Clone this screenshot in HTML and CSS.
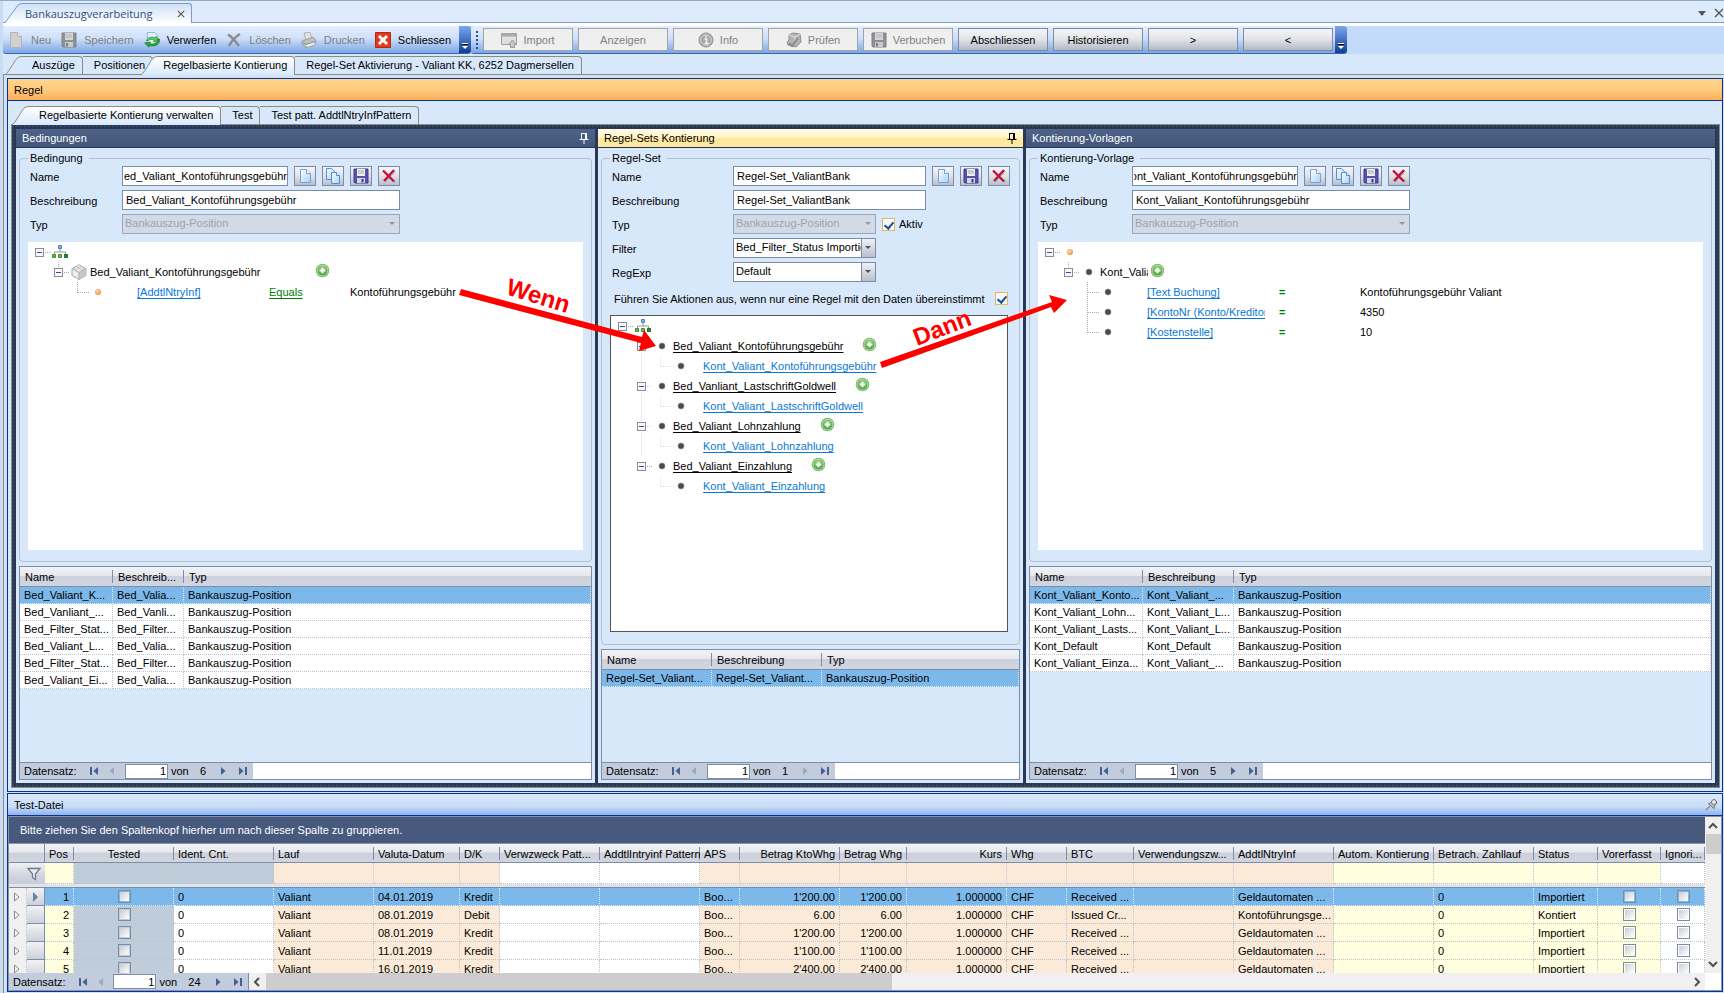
FILE: index.html
```html
<!DOCTYPE html>
<html lang="de">
<head>
<meta charset="utf-8">
<title>Bankauszugverarbeitung</title>
<link rel="stylesheet" href="styles.css">
</head>
<body>
<svg class="defs" aria-hidden="true">
  <defs>
    <linearGradient id="g-doc" x1="0" y1="0" x2="1" y2="1"><stop offset="0" stop-color="#ffffff"/><stop offset="1" stop-color="#a9d0f8"/></linearGradient>
    <linearGradient id="g-tab" x1="0" y1="0" x2="0" y2="1"><stop offset="0" stop-color="#ffffff"/><stop offset="1" stop-color="#d9e9fc"/></linearGradient>
    <linearGradient id="g-app" x1="0" y1="0" x2="0" y2="1"><stop offset="0" stop-color="#cfe0f5"/><stop offset="1" stop-color="#ffffff"/></linearGradient>
    <radialGradient id="g-plus" cx=".5" cy=".3" r=".7"><stop offset="0" stop-color="#a5d88f"/><stop offset="1" stop-color="#3f9a35"/></radialGradient>
    <radialGradient id="g-orange" cx=".4" cy=".35" r=".7"><stop offset="0" stop-color="#ffd9a8"/><stop offset="1" stop-color="#f0883a"/></radialGradient>
  </defs>
  <symbol id="i-new" viewBox="0 0 16 16"><path d="M3.500 1.500h6l4 4v9h-10z" fill="url(#g-doc)" stroke="#6fa3dc"/><path d="M9.500 1.500v4h4" fill="#fff" stroke="#6fa3dc"/></symbol>
  <symbol id="i-new-grey" viewBox="0 0 16 16"><path d="M2.500 .5h7l4 4v11h-11z" fill="#cfd0d2" stroke="#b2b3b6"/><path d="M9.500 .5v4h4" fill="#e6e6e6" stroke="#b2b3b6"/></symbol>
  <symbol id="i-copy" viewBox="0 0 16 16"><path d="M1.500 .5h5l3 3v8h-8z" fill="url(#g-doc)" stroke="#4f8fdb"/><path d="M6.500 4.500h5l3 3v8h-8z" fill="url(#g-doc)" stroke="#4f8fdb"/><path d="M11.500 4.500v3h3" fill="#fff" stroke="#4f8fdb"/></symbol>
  <symbol id="i-save" viewBox="0 0 16 16"><path d="M1 1h14v14H2l-1-1z" fill="#5552ac" stroke="#3d3a8c"/><path d="M4 1h8v7H4z" fill="#eceef2"/><path d="M5 3h6M5 5h6" stroke="#a8abb5"/><path d="M4 10h8v5H4z" fill="#d4d6de"/><path d="M8.500 11h2v3.500h-2z" fill="#3d3a8c"/></symbol>
  <symbol id="i-save-grey" viewBox="0 0 16 16"><path d="M1 1h14v14H2l-1-1z" fill="#8f9093" stroke="#808184"/><path d="M4 1h8v7H4z" fill="#d5d6d8"/><path d="M5 3h6M5 5h6" stroke="#b5b6b8"/><path d="M4 10h8v5H4z" fill="#c8c9cc"/><path d="M5 11h2v3.500H5z" fill="#808184"/></symbol>
  <symbol id="i-del" viewBox="0 0 16 16"><path d="M3 3l11 11M14 3L4 13.500" stroke="#777" stroke-width="2" opacity=".4"/><path d="M2 2.500l11 11M13 2L3 13" stroke="#c3123a" stroke-width="2.200" fill="none"/></symbol>
  <symbol id="i-del-grey" viewBox="0 0 16 16"><path d="M2 2.500C6 5 10 10 13 14M14 2C9 5 5 10 3 14" stroke="#8b8d90" stroke-width="2.600" fill="none"/></symbol>
  <symbol id="i-undo" viewBox="0 0 16 16"><path d="M3.500 .5h7l3 3v10h-10z" fill="#e4f1fd" stroke="#8bb9ea"/><path d="M2.500 8.500C4 5 8 4.500 11 6l1-1.500 2.500 4.500-5 .5 1-1.500C7.500 6.800 5 7.500 4.500 8.500z" fill="#6fd06a" stroke="#14802a" stroke-width=".7"/><path d="M15.500 7c1 5-4 8-10 6.500L5 15.200.7 11l6-1-.9 1.800c4 .8 7.500-.8 7.700-4.800z" fill="#2aa53c" stroke="#14802a" stroke-width=".7"/></symbol>
  <symbol id="i-print" viewBox="0 0 16 16"><path d="M3 1l6-.5 2 6-6 1.500z" fill="#e3e3e3" stroke="#b0b0b0"/><path d="M1 9l11-4 3 4-1 4-9 2.500-4-3z" fill="#c0c1c3" stroke="#9b9c9e"/><path d="M2 10.500l3 2 9-3" stroke="#8b8c8e" fill="none"/><path d="M5 13l8-2.500 1 2L6.500 15z" fill="#e8e8e8"/></symbol>
  <symbol id="i-close" viewBox="0 0 16 16"><path d="M.5.5h15v15H.5z" fill="#e23a1c" stroke="#b8260f"/><path d="M4 4l8 8M12 4l-8 8" stroke="#fff" stroke-width="3"/></symbol>
  <symbol id="i-import" viewBox="0 0 16 16"><path d="M.5 1.500h15v11H.5z" fill="#e0e0e0" stroke="#a2a2a2"/><path d="M.5 1.500h15v3H.5z" fill="#a8a8a8"/><path d="M9.500 15.500v-3h-2l4-4.500 4 4.500h-2v3z" fill="#c6c6c6" stroke="#999"/></symbol>
  <symbol id="i-info" viewBox="0 0 16 16"><circle cx="8" cy="8" r="7" fill="#a8a8a8" stroke="#939393"/><circle cx="8" cy="8" r="5.300" fill="none" stroke="#dcdcdc" stroke-width=".8"/><path d="M8 3.500v2M6.500 7H8.500v4.500M6.500 11.500h4" stroke="#f5f5f5" stroke-width="1.500" fill="none"/></symbol>
  <symbol id="i-check" viewBox="0 0 16 16"><path d="M3 3l4-2 7 1 1 8-5 5-8-2-1-3 2-2z" fill="#b4b4b4" stroke="#8f8f8f"/><path d="M3 3l6 2 5-3M9 5v4" stroke="#dedede" fill="none"/><path d="M3 11l3 3 6-8" stroke="#8a8a8a" stroke-width="2" fill="none"/></symbol>
  <symbol id="i-tree" viewBox="0 0 16 16"><path d="M8 5v3M2.500 10V8h11v2" stroke="#999" fill="none"/><path d="M6.500 1.500h3v3h-3z" fill="#7fb2ec" stroke="#4a85d0"/><path d="M.5 10.500h3v3h-3zM6.500 10.500h3v3h-3z" fill="#6cba5c" stroke="#3d8f33"/><path d="M12.500 10.500h3v3h-3z" fill="#33873a" stroke="#216b28"/></symbol>
  <symbol id="i-cube" viewBox="0 0 16 16"><path d="M1 4.500L8 1l7 3.500v7L8 15.500l-7-4z" fill="#ececec" stroke="#a9a9a9"/><path d="M8 8.500l7-4v7l-7 4z" fill="#c7c7c7"/><path d="M1 4.500l7 4 7-4M8 8.500v7" stroke="#b0b0b0" fill="none"/><ellipse cx="5.500" cy="4" rx="2" ry="1.300" fill="#fff" stroke="#a5a5a5" stroke-width=".7"/><ellipse cx="10.500" cy="4" rx="2" ry="1.300" fill="#fff" stroke="#a5a5a5" stroke-width=".7"/><ellipse cx="8" cy="2.300" rx="2" ry="1.200" fill="#fff" stroke="#a5a5a5" stroke-width=".7"/></symbol>
  <symbol id="i-plus" viewBox="0 0 16 16"><circle cx="8" cy="8" r="7.200" fill="#6cb45c"/><circle cx="8" cy="8" r="5.800" fill="url(#g-plus)" stroke="#d3edc8" stroke-width=".9"/><path d="M8 5v6M5 8h6" stroke="#fff" stroke-width="2"/></symbol>
  <symbol id="i-dot" viewBox="0 0 16 16"><circle cx="8" cy="8" r="3" fill="#4c4c4c" stroke="#8a8a8a" stroke-width=".7"/></symbol>
  <symbol id="i-orange" viewBox="0 0 16 16"><circle cx="8" cy="8" r="3" fill="url(#g-orange)"/></symbol>
  <symbol id="i-pin" viewBox="0 0 10 12"><path d="M2.500 1v6M2.500 1.500h5M6.500 1v6M7.500 1v6M.5 7.500h9M5 8v4" stroke="currentColor" fill="none"/></symbol>
  <symbol id="i-funnel" viewBox="0 0 14 14"><path d="M1 1.500h12L8.500 7v5.500L5.500 10.500V7z" fill="#e9edf3" stroke="#6b7a90" stroke-width="1.300"/></symbol>
  <symbol id="t-exp" viewBox="0 0 16 20"><path d="M10 10.500h6" stroke="#aaa" stroke-dasharray="1 1"/><rect x=".5" y="6.500" width="8" height="8" fill="#f7f8fa" stroke="#8d8d8d"/><path d="M2 10.500h5" stroke="#2b4fa3"/></symbol>
  <symbol id="t-exp-child" viewBox="0 0 16 20"><path d="M4.500 0v6M10 10.500h6" stroke="#aaa" stroke-dasharray="1 1"/><rect x=".5" y="6.500" width="8" height="8" fill="#f7f8fa" stroke="#8d8d8d"/><path d="M2 10.500h5" stroke="#2b4fa3"/></symbol>
  <symbol id="t-exp-pale" viewBox="0 0 16 20"><path d="M4.500 0v20M10 10.500h6" stroke="#ddd" stroke-dasharray="1 1"/><rect x=".5" y="6.500" width="8" height="8" fill="#f7f8fa" stroke="#8d8d8d"/><path d="M2 10.500h5" stroke="#2b4fa3"/></symbol>
  <symbol id="t-line" viewBox="0 0 16 20"><path d="M4.500 0v20" stroke="#ddd" stroke-dasharray="1 1"/></symbol>
  <symbol id="t-mid" viewBox="0 0 12 20"><path d="M.5 0v20M1 10.500h11" stroke="#aaa" stroke-dasharray="1 1"/></symbol>
  <symbol id="t-end" viewBox="0 0 12 20"><path d="M.5 0v11M1 10.500h11" stroke="#aaa" stroke-dasharray="1 1"/></symbol>
  <symbol id="t-end-pale" viewBox="0 0 12 20"><path d="M.5 0v11M1 10.500h11" stroke="#ddd" stroke-dasharray="1 1"/></symbol>
  <symbol id="n-first" viewBox="0 0 10 8"><path d="M1 0h2v8H1zM9 0v8L4.500 4z"/></symbol>
  <symbol id="n-prev" viewBox="0 0 10 8"><path d="M7 0v8L2.500 4z"/></symbol>
  <symbol id="n-next" viewBox="0 0 10 8"><path d="M3 0v8l4.500-4z"/></symbol>
  <symbol id="n-last" viewBox="0 0 10 8"><path d="M7 0h2v8H7zM1 0v8l4.500-4z"/></symbol>
  <symbol id="s-tab" viewBox="0 0 18 19"><path d="M0 19C5 15 10 3 13 1.500Q14 .5 18 .5V19z" fill="#d9e9fb"/><path d="M0 19C5 15 10 3 13 1.500Q14 .5 18 .5" fill="none" stroke="#8d8b80"/></symbol>
  <symbol id="s-tab-on" viewBox="0 0 18 19"><path d="M0 19C5 15 10 3 13 1.500Q14 .5 18 .5V19z" fill="url(#g-tab)"/><path d="M0 19C5 15 10 3 13 1.500Q14 .5 18 .5" fill="none" stroke="#8d8b80"/></symbol>
  <symbol id="s-app" viewBox="0 0 18 20"><path d="M0 20L13 2Q14 .5 18 .5V20z" fill="url(#g-app)"/><path d="M0 20L13 2Q14 .5 18 .5" fill="none" stroke="#7c9ccc"/></symbol>
  <symbol id="x-row" viewBox="0 0 8 10"><path d="M1.500 1v8L6 5z" fill="#f5f5f5" stroke="#8a8a8a"/></symbol>
  <symbol id="x-cur" viewBox="0 0 8 10"><path d="M2 0v10l5-5z" fill="#6b7f9f"/></symbol>
  <symbol id="c-up" viewBox="0 0 10 10"><path d="M1 7l4-4 4 4" fill="none" stroke="#505050" stroke-width="2"/></symbol>
  <symbol id="c-down" viewBox="0 0 10 10"><path d="M1 3l4 4 4-4" fill="none" stroke="#505050" stroke-width="2"/></symbol>
  <symbol id="c-left" viewBox="0 0 10 10"><path d="M7 1L3 5l4 4" fill="none" stroke="#505050" stroke-width="2"/></symbol>
  <symbol id="c-right" viewBox="0 0 10 10"><path d="M3 1l4 4-4 4" fill="none" stroke="#505050" stroke-width="2"/></symbol>
  <symbol id="x-thin" viewBox="0 0 10 10"><path d="M1 1l8 8M9 1L1 9" stroke="#555" stroke-width="1.400"/></symbol>
</svg>

<header class="app-tabs">
  <button class="app-tab"><svg class="app-slope"><use href="#s-app"/></svg><span class="app-label">Bankauszugverarbeitung<svg class="x"><use href="#x-thin"/></svg></span></button>
  <span class="window-tools"><span class="caret"></span><button class="bare" aria-label="Fenster schliessen"><svg class="x-big"><use href="#x-thin"/></svg></button></span>
</header>

<div class="toolbars">
  <div class="toolbar">
    <button class="tool" disabled><svg class="ic"><use href="#i-new-grey"/></svg>Neu</button>
    <button class="tool" disabled><svg class="ic"><use href="#i-save-grey"/></svg>Speichern</button>
    <button class="tool"><svg class="ic"><use href="#i-undo"/></svg>Verwerfen</button>
    <button class="tool" disabled><svg class="ic"><use href="#i-del-grey"/></svg>Löschen</button>
    <button class="tool" disabled><svg class="ic"><use href="#i-print"/></svg>Drucken</button>
    <button class="tool last"><svg class="ic"><use href="#i-close"/></svg>Schliessen</button>
    <button class="overflow" aria-label="Weitere Schaltflächen"><span class="bar"></span><span class="tri"></span></button>
  </div>
  <div class="toolbar second">
    <span class="grip"></span>
    <button class="push" disabled><svg class="ic"><use href="#i-import"/></svg>Import</button>
    <button class="push" disabled>Anzeigen</button>
    <button class="push" disabled><svg class="ic"><use href="#i-info"/></svg>Info</button>
    <button class="push" disabled><svg class="ic"><use href="#i-check"/></svg>Prüfen</button>
    <button class="push" disabled><svg class="ic"><use href="#i-save-grey"/></svg>Verbuchen</button>
    <button class="push">Abschliessen</button>
    <button class="push">Historisieren</button>
    <button class="push">&gt;</button>
    <button class="push">&lt;</button>
    <button class="overflow" aria-label="Weitere Schaltflächen"><span class="bar"></span><span class="tri"></span></button>
  </div>
</div>

<nav class="tabs">
  <button class="tab sloped"><svg class="slope"><use href="#s-tab"/></svg><span class="tab-text">Auszüge</span></button>
  <button class="tab"><span class="tab-text">Positionen</span></button>
  <button class="tab sloped on overlap"><svg class="slope"><use href="#s-tab-on"/></svg><span class="tab-text">Regelbasierte Kontierung</span></button>
  <button class="tab"><span class="tab-text">Regel-Set Aktivierung - Valiant KK, 6252 Dagmersellen</span></button>
</nav>

<main class="page">
  <section class="frame rule">
    <h1 class="bar-orange">Regel</h1>
    <nav class="tabs inner">
      <button class="tab sloped on"><svg class="slope"><use href="#s-tab-on"/></svg><span class="tab-text">Regelbasierte Kontierung verwalten</span></button>
      <button class="tab"><span class="tab-text">Test</span></button>
      <button class="tab"><span class="tab-text">Test patt. AddtlNtryInfPattern</span></button>
    </nav>
    <div class="board">
      <section class="panel">
        <h2 class="panel-head">Bedingungen<svg class="pin"><use href="#i-pin"/></svg></h2>
        <fieldset class="group">
          <legend>Bedingung</legend>
          <div class="form">
            <label for="b-name">Name</label>
            <div class="line"><input class="text name from-end" id="b-name" value="Bed_Valiant_Kontoführungsgebühr">
              <button class="sq" aria-label="Neu"><svg class="ic"><use href="#i-new"/></svg></button><button class="sq" aria-label="Kopieren"><svg class="ic"><use href="#i-copy"/></svg></button><button class="sq" aria-label="Speichern"><svg class="ic"><use href="#i-save"/></svg></button><button class="sq" aria-label="Löschen"><svg class="ic"><use href="#i-del"/></svg></button></div>
            <label for="b-desc">Beschreibung</label>
            <div class="line"><input class="text full" id="b-desc" value="Bed_Valiant_Kontoführungsgebühr"></div>
            <label for="b-typ">Typ</label>
            <div class="line"><span class="drop full off"><select id="b-typ" disabled><option>Bankauszug-Position</option></select></span></div>
          </div>
          <div class="tree">
            <div class="node"><svg class="exp"><use href="#t-exp"/></svg><svg class="ic"><use href="#i-tree"/></svg></div>
            <div class="node lv1"><svg class="exp"><use href="#t-exp-child"/></svg><svg class="ic"><use href="#i-cube"/></svg><span class="cap root-cap">Bed_Valiant_Kontoführungsgebühr</span><svg class="plus"><use href="#i-plus"/></svg></div>
            <div class="node lv2"><svg class="branch"><use href="#t-end"/></svg><svg class="ic"><use href="#i-orange"/></svg><a class="field" href="#">[AddtlNtryInf]</a><a class="op" href="#">Equals</a><span class="val">Kontoführungsgebühr</span></div>
          </div>
        </fieldset>
        <div class="grid">
          <div class="grid-body">
            <table class="list">
              <colgroup><col class="w-93"><col class="w-71"><col></colgroup>
              <thead><tr><th>Name</th><th>Beschreib...</th><th>Typ</th></tr></thead>
              <tbody>
                <tr class="sel"><td>Bed_Valiant_K...</td><td>Bed_Valia...</td><td>Bankauszug-Position</td></tr>
                <tr><td>Bed_Vanliant_...</td><td>Bed_Vanli...</td><td>Bankauszug-Position</td></tr>
                <tr><td>Bed_Filter_Stat...</td><td>Bed_Filter...</td><td>Bankauszug-Position</td></tr>
                <tr><td>Bed_Valiant_L...</td><td>Bed_Valia...</td><td>Bankauszug-Position</td></tr>
                <tr><td>Bed_Filter_Stat...</td><td>Bed_Filter...</td><td>Bankauszug-Position</td></tr>
                <tr><td>Bed_Valiant_Ei...</td><td>Bed_Valia...</td><td>Bankauszug-Position</td></tr>
              </tbody>
            </table>
          </div>
          <div class="pager-row"><div class="pager"><label for="p1">Datensatz:</label><button class="step" aria-label="Erster"><svg><use href="#n-first"/></svg></button><button class="step back" disabled aria-label="Vorheriger"><svg><use href="#n-prev"/></svg></button><input id="p1" value="1"><span class="of">von</span><span class="total">6</span><button class="step" aria-label="Nächster"><svg><use href="#n-next"/></svg></button><button class="step" aria-label="Letzter"><svg><use href="#n-last"/></svg></button></div></div>
        </div>
      </section>

      <section class="panel">
        <h2 class="panel-head active">Regel-Sets Kontierung<svg class="pin"><use href="#i-pin"/></svg></h2>
        <fieldset class="group middle">
          <legend>Regel-Set</legend>
          <div class="form">
            <label for="r-name">Name</label>
            <div class="line"><input class="text mid" id="r-name" value="Regel-Set_ValiantBank">
              <button class="sq" aria-label="Neu"><svg class="ic"><use href="#i-new"/></svg></button><button class="sq" aria-label="Speichern"><svg class="ic"><use href="#i-save"/></svg></button><button class="sq" aria-label="Löschen"><svg class="ic"><use href="#i-del"/></svg></button></div>
            <label for="r-desc">Beschreibung</label>
            <div class="line"><input class="text mid" id="r-desc" value="Regel-Set_ValiantBank"></div>
            <label for="r-typ">Typ</label>
            <div class="line"><span class="drop off"><select id="r-typ" disabled><option>Bankauszug-Position</option></select></span><label class="check"><input type="checkbox" class="gold" checked>Aktiv</label></div>
            <label for="r-filter">Filter</label>
            <div class="line"><span class="drop"><select id="r-filter"><option>Bed_Filter_Status Importiert</option></select></span></div>
            <label for="r-exp">RegExp</label>
            <div class="line"><span class="drop"><select id="r-exp"><option>Default</option></select></span></div>
          </div>
          <label class="once"><span>Führen Sie Aktionen aus, wenn nur eine Regel mit den Daten übereinstimmt</span><input type="checkbox" class="gold" checked></label>
          <div class="tree framed">
            <div class="node"><svg class="exp"><use href="#t-exp"/></svg><svg class="ic"><use href="#i-tree"/></svg></div>
            <div class="node lv1"><svg class="exp"><use href="#t-exp-pale"/></svg><svg class="ic"><use href="#i-dot"/></svg><a class="cap black" href="#">Bed_Valiant_Kontoführungsgebühr</a><svg class="plus"><use href="#i-plus"/></svg></div>
            <div class="node lv1"><svg class="exp"><use href="#t-line"/></svg><svg class="branch under"><use href="#t-end-pale"/></svg><svg class="ic"><use href="#i-dot"/></svg><a class="cap sub" href="#">Kont_Valiant_Kontoführungsgebühr</a></div>
            <div class="node lv1"><svg class="exp"><use href="#t-exp-pale"/></svg><svg class="ic"><use href="#i-dot"/></svg><a class="cap black" href="#">Bed_Vanliant_LastschriftGoldwell</a><svg class="plus"><use href="#i-plus"/></svg></div>
            <div class="node lv1"><svg class="exp"><use href="#t-line"/></svg><svg class="branch under"><use href="#t-end-pale"/></svg><svg class="ic"><use href="#i-dot"/></svg><a class="cap sub" href="#">Kont_Valiant_LastschriftGoldwell</a></div>
            <div class="node lv1"><svg class="exp"><use href="#t-exp-pale"/></svg><svg class="ic"><use href="#i-dot"/></svg><a class="cap black" href="#">Bed_Valiant_Lohnzahlung</a><svg class="plus"><use href="#i-plus"/></svg></div>
            <div class="node lv1"><svg class="exp"><use href="#t-line"/></svg><svg class="branch under"><use href="#t-end-pale"/></svg><svg class="ic"><use href="#i-dot"/></svg><a class="cap sub" href="#">Kont_Valiant_Lohnzahlung</a></div>
            <div class="node lv1"><svg class="exp"><use href="#t-exp"/></svg><svg class="ic"><use href="#i-dot"/></svg><a class="cap black" href="#">Bed_Valiant_Einzahlung</a><svg class="plus"><use href="#i-plus"/></svg></div>
            <div class="node lv2"><svg class="branch"><use href="#t-end-pale"/></svg><svg class="ic"><use href="#i-dot"/></svg><a class="cap sub" href="#">Kont_Valiant_Einzahlung</a></div>
          </div>
        </fieldset>
        <div class="grid short">
          <div class="grid-body">
            <table class="list">
              <colgroup><col class="w-110"><col class="w-110"><col></colgroup>
              <thead><tr><th>Name</th><th>Beschreibung</th><th>Typ</th></tr></thead>
              <tbody><tr class="sel"><td>Regel-Set_Valiant...</td><td>Regel-Set_Valiant...</td><td>Bankauszug-Position</td></tr></tbody>
            </table>
          </div>
          <div class="pager-row"><div class="pager"><label for="p2">Datensatz:</label><button class="step" aria-label="Erster"><svg><use href="#n-first"/></svg></button><button class="step back" disabled aria-label="Vorheriger"><svg><use href="#n-prev"/></svg></button><input id="p2" value="1"><span class="of">von</span><span class="total">1</span><button class="step" disabled aria-label="Nächster"><svg><use href="#n-next"/></svg></button><button class="step" aria-label="Letzter"><svg><use href="#n-last"/></svg></button></div></div>
        </div>
      </section>

      <section class="panel">
        <h2 class="panel-head">Kontierung-Vorlagen</h2>
        <fieldset class="group">
          <legend>Kontierung-Vorlage</legend>
          <div class="form">
            <label for="k-name">Name</label>
            <div class="line"><input class="text name from-end" id="k-name" value="Kont_Valiant_Kontoführungsgebühr">
              <button class="sq" aria-label="Neu"><svg class="ic"><use href="#i-new"/></svg></button><button class="sq" aria-label="Kopieren"><svg class="ic"><use href="#i-copy"/></svg></button><button class="sq" aria-label="Speichern"><svg class="ic"><use href="#i-save"/></svg></button><button class="sq" aria-label="Löschen"><svg class="ic"><use href="#i-del"/></svg></button></div>
            <label for="k-desc">Beschreibung</label>
            <div class="line"><input class="text full" id="k-desc" value="Kont_Valiant_Kontoführungsgebühr"></div>
            <label for="k-typ">Typ</label>
            <div class="line"><span class="drop full off"><select id="k-typ" disabled><option>Bankauszug-Position</option></select></span></div>
          </div>
          <div class="tree">
            <div class="node"><svg class="exp"><use href="#t-exp"/></svg><svg class="ic"><use href="#i-orange"/></svg></div>
            <div class="node lv1"><svg class="exp"><use href="#t-exp-child"/></svg><svg class="ic"><use href="#i-dot"/></svg><span class="cap cut">Kont_Valiant_Kontoführungsgebühr</span><svg class="plus near"><use href="#i-plus"/></svg></div>
            <div class="node lv2"><svg class="branch"><use href="#t-mid"/></svg><svg class="ic"><use href="#i-dot"/></svg><a class="field" href="#">[Text Buchung]</a><span class="op eq">=</span><span class="val">Kontoführungsgebühr Valiant</span></div>
            <div class="node lv2"><svg class="branch"><use href="#t-mid"/></svg><svg class="ic"><use href="#i-dot"/></svg><a class="field" href="#">[KontoNr (Konto/Kreditor)]</a><span class="op eq">=</span><span class="val">4350</span></div>
            <div class="node lv2"><svg class="branch"><use href="#t-end"/></svg><svg class="ic"><use href="#i-dot"/></svg><a class="field" href="#">[Kostenstelle]</a><span class="op eq">=</span><span class="val">10</span></div>
          </div>
        </fieldset>
        <div class="grid">
          <div class="grid-body">
            <table class="list">
              <colgroup><col class="w-113"><col class="w-91"><col></colgroup>
              <thead><tr><th>Name</th><th>Beschreibung</th><th>Typ</th></tr></thead>
              <tbody>
                <tr class="sel"><td>Kont_Valiant_Konto...</td><td>Kont_Valiant_...</td><td>Bankauszug-Position</td></tr>
                <tr><td>Kont_Valiant_Lohn...</td><td>Kont_Valiant_L...</td><td>Bankauszug-Position</td></tr>
                <tr><td>Kont_Valiant_Lasts...</td><td>Kont_Valiant_L...</td><td>Bankauszug-Position</td></tr>
                <tr><td>Kont_Default</td><td>Kont_Default</td><td>Bankauszug-Position</td></tr>
                <tr><td>Kont_Valiant_Einza...</td><td>Kont_Valiant_...</td><td>Bankauszug-Position</td></tr>
              </tbody>
            </table>
          </div>
          <div class="pager-row"><div class="pager"><label for="p3">Datensatz:</label><button class="step" aria-label="Erster"><svg><use href="#n-first"/></svg></button><button class="step back" disabled aria-label="Vorheriger"><svg><use href="#n-prev"/></svg></button><input id="p3" value="1"><span class="of">von</span><span class="total">5</span><button class="step" aria-label="Nächster"><svg><use href="#n-next"/></svg></button><button class="step" aria-label="Letzter"><svg><use href="#n-last"/></svg></button></div></div>
        </div>
      </section>

      <svg class="arrows" viewBox="0 0 620 100" aria-hidden="true">
        <g fill="#fe0000">
          <path d="M3 23L184 71l2-7 12 16-17 5 2-8L1 29z"/>
          <path d="M422 96L594 36l-3-7 18 5-13 13-3-6L424 102z"/>
        </g>
        <text class="note" transform="translate(47 28) rotate(17)">Wenn</text>
        <text class="note" transform="translate(459 80) rotate(-21)">Dann</text>
      </svg>
    </div>
  </section>

  <section class="frame test">
    <h2 class="bar-blue">Test-Datei<svg class="pushpin" viewBox="0 0 16 16"><path d="M1 15l5-5" stroke="#777" stroke-width="1.300"/><path d="M4 7l3-1 4-4 4 3-3 4-1 4z" fill="#b9bcc2" stroke="#666"/><circle cx="11" cy="5" r="3" fill="#e8eaee" stroke="#666"/></svg></h2>
    <div class="data">
      <div class="view">
        <p class="hint">Bitte ziehen Sie den Spaltenkopf hierher um nach dieser Spalte zu gruppieren.</p>
        <table class="wide">
          <colgroup><col class="w-18"><col class="w-18"><col class="w-29"><col class="w-100"><col class="w-100"><col class="w-100"><col class="w-86"><col class="w-40"><col class="w-100"><col class="w-100"><col class="w-40"><col class="w-100"><col class="w-67"><col class="w-100"><col class="w-60"><col class="w-67"><col class="w-100"><col class="w-100"><col class="w-100"><col class="w-100"><col class="w-64"><col class="w-63"><col></colgroup>
          <thead>
            <tr><th colspan="2" class="edge"></th><th>Pos</th><th class="c">Tested</th><th>Ident. Cnt.</th><th>Lauf</th><th>Valuta-Datum</th><th>D/K</th><th>Verwzweck Patt...</th><th>AddtlIntryinf Pattern</th><th>APS</th><th class="r">Betrag KtoWhg</th><th class="r">Betrag Whg</th><th class="r">Kurs</th><th>Whg</th><th>BTC</th><th>Verwendungszw...</th><th>AddtlNtryInf</th><th>Autom. Kontierung</th><th>Betrach. Zahllauf</th><th>Status</th><th>Vorerfasst</th><th>Ignori...</th></tr>
            <tr class="filter"><td colspan="2" class="corner"><svg class="funnel"><use href="#i-funnel"/></svg></td><td class="y"></td><td class="g"></td><td class="g"></td><td class="p"></td><td class="p"></td><td class="p"></td><td></td><td></td><td class="p"></td><td class="p"></td><td class="p"></td><td class="p"></td><td class="p"></td><td class="p"></td><td class="p"></td><td class="p"></td><td class="y"></td><td class="y"></td><td class="y"></td><td class="y"></td><td></td></tr>
            <tr class="split"><td colspan="23"></td></tr>
          </thead>
          <tbody>
            <tr class="sel"><td class="open"><svg class="mark"><use href="#x-row"/></svg></td><td class="head"><svg class="mark"><use href="#x-cur"/></svg></td><td class="y r">1</td><td class="g c"><input type="checkbox" aria-label="Tested"></td><td>0</td><td class="p">Valiant</td><td class="p">04.01.2019</td><td class="p">Kredit</td><td></td><td></td><td class="p">Boo...</td><td class="p r">1'200.00</td><td class="p r">1'200.00</td><td class="p r">1.000000</td><td class="p">CHF</td><td class="p">Received ...</td><td class="p"></td><td class="p">Geldautomaten ...</td><td class="y"></td><td class="y">0</td><td class="y">Importiert</td><td class="y c"><input type="checkbox" aria-label="Vorerfasst"></td><td class="c"><input type="checkbox" aria-label="Ignorieren"></td></tr>
            <tr><td class="open"><svg class="mark"><use href="#x-row"/></svg></td><td class="head"></td><td class="y r">2</td><td class="g c"><input type="checkbox" aria-label="Tested"></td><td>0</td><td class="p">Valiant</td><td class="p">08.01.2019</td><td class="p">Debit</td><td></td><td></td><td class="p">Boo...</td><td class="p r">6.00</td><td class="p r">6.00</td><td class="p r">1.000000</td><td class="p">CHF</td><td class="p">Issued Cr...</td><td class="p"></td><td class="p">Kontoführungsge...</td><td class="y"></td><td class="y">0</td><td class="y">Kontiert</td><td class="y c"><input type="checkbox" aria-label="Vorerfasst"></td><td class="c"><input type="checkbox" aria-label="Ignorieren"></td></tr>
            <tr><td class="open"><svg class="mark"><use href="#x-row"/></svg></td><td class="head"></td><td class="y r">3</td><td class="g c"><input type="checkbox" aria-label="Tested"></td><td>0</td><td class="p">Valiant</td><td class="p">08.01.2019</td><td class="p">Kredit</td><td></td><td></td><td class="p">Boo...</td><td class="p r">1'200.00</td><td class="p r">1'200.00</td><td class="p r">1.000000</td><td class="p">CHF</td><td class="p">Received ...</td><td class="p"></td><td class="p">Geldautomaten ...</td><td class="y"></td><td class="y">0</td><td class="y">Importiert</td><td class="y c"><input type="checkbox" aria-label="Vorerfasst"></td><td class="c"><input type="checkbox" aria-label="Ignorieren"></td></tr>
            <tr><td class="open"><svg class="mark"><use href="#x-row"/></svg></td><td class="head"></td><td class="y r">4</td><td class="g c"><input type="checkbox" aria-label="Tested"></td><td>0</td><td class="p">Valiant</td><td class="p">11.01.2019</td><td class="p">Kredit</td><td></td><td></td><td class="p">Boo...</td><td class="p r">1'100.00</td><td class="p r">1'100.00</td><td class="p r">1.000000</td><td class="p">CHF</td><td class="p">Received ...</td><td class="p"></td><td class="p">Geldautomaten ...</td><td class="y"></td><td class="y">0</td><td class="y">Importiert</td><td class="y c"><input type="checkbox" aria-label="Vorerfasst"></td><td class="c"><input type="checkbox" aria-label="Ignorieren"></td></tr>
            <tr><td class="open"><svg class="mark"><use href="#x-row"/></svg></td><td class="head"></td><td class="y r">5</td><td class="g c"><input type="checkbox" aria-label="Tested"></td><td>0</td><td class="p">Valiant</td><td class="p">16.01.2019</td><td class="p">Kredit</td><td></td><td></td><td class="p">Boo...</td><td class="p r">2'400.00</td><td class="p r">2'400.00</td><td class="p r">1.000000</td><td class="p">CHF</td><td class="p">Received ...</td><td class="p"></td><td class="p">Geldautomaten ...</td><td class="y"></td><td class="y">0</td><td class="y">Importiert</td><td class="y c"><input type="checkbox" aria-label="Vorerfasst"></td><td class="c"><input type="checkbox" aria-label="Ignorieren"></td></tr>
          </tbody>
        </table>
      </div>
      <div class="vscroll"><svg class="chev"><use href="#c-up"/></svg><span class="thumb"></span><svg class="chev"><use href="#c-down"/></svg></div>
      <div class="foot">
        <div class="pager"><label for="p4">Datensatz:</label><button class="step" aria-label="Erster"><svg><use href="#n-first"/></svg></button><button class="step back" disabled aria-label="Vorheriger"><svg><use href="#n-prev"/></svg></button><input id="p4" value="1"><span class="of">von</span><span class="total">24</span><button class="step" aria-label="Nächster"><svg><use href="#n-next"/></svg></button><button class="step" aria-label="Letzter"><svg><use href="#n-last"/></svg></button></div>
        <div class="hscroll"><svg class="chev"><use href="#c-left"/></svg><span class="track"><span class="thumb"></span></span><svg class="chev"><use href="#c-right"/></svg></div>
      </div>
      <div class="corner-box"></div>
    </div>
  </section>
</main>
</body>
</html>
```
FILE: styles.css
```css
* { box-sizing: border-box; }

body {
  margin: 0;
  height: 100vh;
  display: flex;
  flex-direction: column;
  overflow: hidden;
  padding-left: 3px;
  background: #cadcf4;
  border-top: 1px solid #93a9cb;
  color: #000;
  font: 11px/14px "Liberation Sans", Arial, sans-serif;
}

button, input, select { font: inherit; color: inherit; margin: 0; }
button { border: 0; background: none; padding: 0; white-space: nowrap; }
h1, h2, p { margin: 0; font: inherit; }
svg { display: block; flex: none; }
.defs { position: absolute; width: 0; height: 0; }
.ic { width: 16px; height: 16px; }

/* document tabs */
.app-tabs {
  display: flex;
  justify-content: space-between;
  height: 22px;
  padding: 2px 0 0 2px;
  background: #deebfc;
  box-shadow: inset 0 -1px #7c9ccc;
  flex: none;
}
.app-tab { display: flex; height: 20px; }
.app-slope { width: 18px; height: 20px; }
.app-label {
  display: flex;
  align-items: center;
  gap: 24px;
  height: 20px;
  padding: 1px 6px 0 2px;
  border: 1px solid #7c9ccc;
  border-width: 1px 1px 0 0;
  border-radius: 0 3px 0 0;
  background: linear-gradient(#cfe0f5, #fff);
  color: #2f4f7d;
  font: 11px/18px "Open Sans", sans-serif;
}
.x { width: 8px; height: 8px; }
.x-big { width: 10px; height: 10px; }
.window-tools { display: flex; align-items: center; gap: 8px; }
.caret { border: 4px solid transparent; border-top: 5px solid #555; border-bottom: 0; }

/* toolbars */
.toolbars {
  display: flex;
  flex: none;
  height: 31px;
  border-top: 3px solid #fff;
  background: #c3daf9;
}
.toolbar {
  display: flex;
  align-items: center;
  height: 28px;
  padding-left: 5px;
  border-radius: 3px;
  border-bottom: 1px solid #3b68ad;
  background: linear-gradient(#e3eefe, #cfe0fa 45%, #7da5e4);
}
.tool { display: flex; align-items: center; gap: 7px; padding-right: 10px; height: 24px; }
.tool.last { padding-right: 8px; }
.tool:disabled, .push:disabled { color: #808080; }
.overflow {
  display: flex;
  flex-direction: column;
  align-items: center;
  justify-content: flex-end;
  gap: 1px;
  width: 12px;
  height: 27px;
  padding-bottom: 4px;
  border-radius: 0 3px 3px 0;
  background: linear-gradient(#7aa7f0, #0f3f93);
}
.bar { width: 6px; height: 2px; background: #fff; border-bottom: 1px solid #000; }
.tri { border: 3px solid transparent; border-top-color: #fff; border-bottom: 0; }
.second { gap: 5px; padding-left: 5px; }
.second .overflow { margin-left: -3px; }
.grip { width: 2px; height: 18px; background: repeating-linear-gradient(#2c4f92 0 2px, transparent 2px 4px); }
.push {
  display: flex;
  align-items: center;
  justify-content: center;
  gap: 6px;
  width: 90px;
  height: 23px;
  border: 1px solid #7b8ca8;
  background: linear-gradient(#f4f5f7, #e4e6ea 45%, #b3b9c6);
}
.push:disabled { background: #efefef; border-color: #a3a3a3; }

/* page tabs */
.tabs {
  display: flex;
  flex: none;
  height: 21px;
  padding: 2px 0 0 2px;
  background: #d8e8fb;
  box-shadow: inset 0 -1px #8d8b80;
}
.inner { height: 24px; padding: 5px 0 0 1px; margin: 0 2px 0 3px; }
.tab { display: flex; height: 18px; }
.tab.on { height: 19px; z-index: 1; }
.tab.overlap { margin-left: -12px; }
.slope { width: 18px; height: 19px; }
.sloped:not(.on) { overflow: hidden; }
.tab-text {
  height: 100%;
  padding: 1px 7px 0 11px;
  border: 1px solid #8d8b80;
  border-width: 1px 1px 0 0;
  border-radius: 0 4px 0 0;
}
.sloped .tab-text { padding-left: 9px; }
.overlap .tab-text { padding-left: 4px; }
.on .tab-text { background: linear-gradient(#fff, #d9e9fc); }

/* framed sections */
.page {
  flex: 1;
  min-height: 0;
  display: flex;
  flex-direction: column;
  gap: 1px;
  padding: 3px 1px 1px 3px;
  border-left: 1px solid #8d8b80;
  background: #d0e2f9;
}
.frame { display: flex; flex-direction: column; border: 1px solid #0a3296; background: #d8e8fb; }
.rule { flex: 1; min-height: 0; }
.bar-orange {
  height: 22px;
  padding: 4px 6px;
  border-bottom: 1px solid #0a3296;
  background: linear-gradient(#ffd58c, #ffcb7d 50%, #feae58);
  flex: none;
}
.bar-blue {
  display: flex;
  justify-content: space-between;
  height: 22px;
  padding: 4px 4px 3px 6px;
  border-bottom: 1px solid #0a3296;
  background: linear-gradient(#dce9fe, #c8dcf8 60%, #8fb4ea);
}
.pushpin { width: 13px; height: 13px; }

.board {
  position: relative;
  flex: 1;
  min-height: 0;
  display: grid;
  grid-template-columns: 579fr 425fr 689fr;
  gap: 3px;
  margin: 0 2px 3px 3px;
  padding: 4px;
  border: 1px solid #8d8b80;
  border-top: 0;
  background: radial-gradient(circle at 1px 1px, #35476a 1px, transparent 1px) 0 0 / 4px 4px #283856;
}
.panel { display: flex; flex-direction: column; min-width: 0; min-height: 0; background: #d8e8fb; padding-bottom: 3px; box-shadow: 0 0 0 2px #283856; }
.panel-head {
  display: flex;
  justify-content: space-between;
  align-items: center;
  flex: none;
  height: 19px;
  padding: 0 6px;
  border-bottom: 1px solid #243552;
  background: linear-gradient(#4f6287, #42557a);
  color: #fff;
}
.active { background: linear-gradient(#fffbea, #fff1bf 50%, #ffe79b 51%, #ffe9a2); color: #000; }
.pin { width: 10px; height: 12px; }

.group {
  flex: 1;
  min-width: 0;
  min-height: 0;
  display: flex;
  flex-direction: column;
  margin: 3px 3px 4px;
  padding: 1px 8px 11px;
  border: 1px solid #b6bfcd;
  border-radius: 4px;
}
.middle { padding-right: 11px; padding-bottom: 12px; }
legend { padding: 0 6px 0 2px; }
.form { display: grid; grid-template-columns: 92px 1fr; grid-auto-rows: 20px; row-gap: 4px; padding-left: 2px; line-height: 22px; flex: none; }
.middle .form { grid-template-columns: 121px 1fr; }
.line { display: flex; gap: 6px; height: 20px; }
.text { height: 20px; padding: 0 3px 1px; border: 1px solid #7c8ba6; background: #fff; }
.name { width: 166px; padding-left: 1px; padding-right: 0; }
.mid { width: 193px; }
.full { width: 278px; }
.from-end { direction: rtl; }
.sq {
  display: flex;
  align-items: center;
  justify-content: center;
  width: 22px;
  height: 20px;
  border: 1px solid #7c8ba6;
  background: linear-gradient(#f4f5f8, #dfe2e8 50%, #b9bfcc);
}
.drop { position: relative; display: block; width: 143px; height: 20px; border: 1px solid #7c8ba6; background: #fff; }
.drop.full { width: 278px; }
.drop select {
  appearance: none;
  display: block;
  width: 100%;
  height: 18px;
  padding: 0 14px 2px 2px;
  border: 0;
  line-height: 16px;
  background: linear-gradient(#eff1f4, #b9bfcc) right / 13px 18px no-repeat, linear-gradient(#7c8ba6, #7c8ba6) right 13px top / 1px 18px no-repeat;
  opacity: 1;
}
.drop.off { background: #d3dae6; border-color: #9aa5b8; }
.drop.off select { background: none; color: #9aa4b5; }
.drop::after {
  content: "";
  position: absolute;
  right: 4px;
  top: 7px;
  border: 3px solid transparent;
  border-top-color: #44536f;
  border-bottom: 0;
  pointer-events: none;
}
.drop.off::after { border-top-color: #8c97aa; }
.check { display: flex; align-items: center; gap: 4px; }
.once { display: flex; align-items: center; justify-content: space-between; height: 33px; padding-left: 4px; flex: none; }

input[type="checkbox"] {
  appearance: none;
  display: inline-block;
  flex: none;
  width: 13px;
  height: 13px;
  border: 1px solid #7d8ba3;
  background: linear-gradient(135deg, #c9cdd4, #fff) content-box #fff;
  padding: 1px;
}
input.gold { display: flex; justify-content: center; border-color: #e6b85a; background: #f4f7fb; }
input.gold::before { content: ""; width: 4px; height: 7px; border: solid #1a5394; border-width: 0 2px 2px 0; transform: rotate(40deg); }

/* trees */
.tree { flex: 1; min-height: 0; margin-top: 8px; background: #fff; overflow: hidden; }
.framed { margin-top: 0; border: 1px solid #555; }
.node { display: flex; align-items: center; height: 20px; padding-left: 7px; white-space: nowrap; }
.lv1 { padding-left: 26px; }
.lv2 { padding-left: 49px; }
.exp { width: 16px; height: 20px; margin-right: 1px; }
.branch { width: 12px; height: 20px; margin-right: 1px; }
.under { margin-left: 6px; }
.cap { margin-left: 3px; }
.sub { margin-left: 14px; }
.root-cap { width: 224px; }
.cut { width: 48px; overflow: hidden; }
.plus { width: 15px; height: 15px; margin: 0 0 4px 19px; }
.root-cap + .plus { margin-left: 1px; }
.plus.near { margin-left: 2px; }
a { color: #0a78d4; text-decoration-skip-ink: none; text-underline-offset: 2px; }
.black { color: #000; }
.field { width: 118px; margin-left: 31px; overflow: hidden; }
.op { width: 81px; margin-left: 14px; color: #008000; }
.eq { font-weight: bold; }
.val { white-space: nowrap; }

/* list grids */
.grid { display: flex; flex-direction: column; flex: none; height: 214px; margin: 0 3px; border: 1px solid #7f8ca5; }
.short { height: 131px; }
.grid-body { flex: 1; min-height: 0; overflow: hidden; }
table { table-layout: fixed; width: 100%; border-spacing: 0; border-collapse: separate; }
th {
  padding: 1px 4px 0 5px;
  height: 20px;
  border-bottom: 1px solid #7f8ca5;
  text-align: left;
  font-weight: normal;
  white-space: nowrap;
  overflow: hidden;
  background: linear-gradient(#7f8ca5, #7f8ca5) right center / 1px 13px no-repeat, linear-gradient(#f2f3f6, #e6e8ed 45%, #ccd1dc 50%, #d0d5e0);
}
.list th:last-child { background: linear-gradient(#f2f3f6, #e6e8ed 45%, #ccd1dc 50%, #d0d5e0); }
td {
  padding: 0 3px 0 4px;
  height: 17px;
  border: 1px dotted #bcc3cf;
  border-width: 0 1px 1px 0;
  background: #fff;
  line-height: 15px;
  white-space: nowrap;
  overflow: hidden;
}
.sel td { background: #7db8ea; border-color: #dcecfa; }

.pager-row { flex: none; height: 17px; border-top: 1px solid #7f8ca5; background: #fff; display: flex; }
.pager { display: flex; align-items: center; height: 16px; padding-left: 4px; background: #c2ccdc; }
.pager label { width: 60px; }
.pager input { width: 43px; height: 15px; padding: 0 1px; border: 1px solid #7f8ca5; background: #fff; text-align: right; }
.step { width: 20px; height: 15px; }
.step svg { width: 10px; height: 8px; margin: 0 auto; fill: #44608e; }
.step:disabled svg { fill: #9ba9c0; }
.step.back { width: 16px; margin-right: 5px; }
.of { width: 32px; padding-left: 3px; }
.total { min-width: 13px; }

.w-18 { width: 18px; } .w-29 { width: 29px; } .w-40 { width: 40px; } .w-60 { width: 60px; }
.w-63 { width: 63px; } .w-64 { width: 64px; } .w-67 { width: 67px; } .w-71 { width: 71px; }
.w-86 { width: 86px; } .w-91 { width: 91px; } .w-93 { width: 93px; } .w-100 { width: 100px; }
.w-110 { width: 110px; } .w-113 { width: 113px; }

/* record grid */
.data { display: grid; grid-template-columns: 1fr 16px; grid-template-rows: 156px 17px; border: 1px solid #8a94a8; }
.view { overflow: hidden; min-width: 0; background: #fff; }
.hint { height: 27px; padding: 6px 11px; background: #475a7d; border-bottom: 1px solid #8a94a8; color: #fff; }
.wide th { height: 19px; padding: 1px 0 0 4px; }
.wide th.c { padding-right: 4px; }
.wide th.r { padding-right: 5px; }
.wide td { height: 18px; padding-bottom: 0; line-height: 16px; }
.wide td.r { padding-right: 4px; }
.wide .edge { background: linear-gradient(#f2f3f6, #e6e8ed 45%, #ccd1dc 50%, #d0d5e0); border-right: 1px solid #7f8ca5; }
.y { background: #ffffdf; }
.g { background: #bfccd9; }
.p { background: #faead7; }
.sel .y, .sel .g, .sel .p { background: #7db8ea; }
.c { text-align: center; }
.r { text-align: right; }
.wide .filter td { height: 21px; }
.wide .filter .corner { background: linear-gradient(#f0f1f4, #d0d5df 60%, #c7cdd8); border: 0; }
.wide .split td { height: 4px; padding: 0; line-height: 0; background: #dfe3ea; border: 0; border-bottom: 1px solid #7f8ca5; }
.funnel { width: 14px; height: 14px; margin-left: 14px; }
.wide .open { background: #f0f0f0; border-bottom: 0; border-color: #bcc3cf; }
.wide .head { background: linear-gradient(#f2f3f6, #e0e3e9 45%, #cbd0db); border: 1px solid #7f8ca5; border-width: 0 1px 1px 0; }
.mark { width: 8px; height: 10px; }
.wide input { vertical-align: middle; margin-bottom: 2px; }

.vscroll { display: flex; flex-direction: column; align-items: center; background: #f0f0f0; padding: 4px 0; }
.vscroll .thumb { width: 15px; height: 20px; margin: 3px 0 auto; background: #cdcdcd; }
.chev { width: 10px; height: 10px; }
.foot { display: flex; min-width: 0; }
.foot .pager { width: 240px; height: 17px; border-right: 1px solid #7f8ca5; flex: none; }
.foot .total { width: 20px; }
.hscroll { display: flex; align-items: center; flex: 1; gap: 4px; padding: 0 3px; background: #f0f0f0; }
.track { flex: 1; height: 100%; display: flex; }
.track .thumb { width: 44%; background: #cdcdcd; }
.corner-box { background: #fff; }

/* annotation over the panels */
.arrows { position: absolute; left: 446px; top: 141px; width: 620px; height: 100px; overflow: visible; pointer-events: none; }
.note { fill: #fe0000; font: bold 24px "Liberation Sans", Arial, sans-serif; }
```
